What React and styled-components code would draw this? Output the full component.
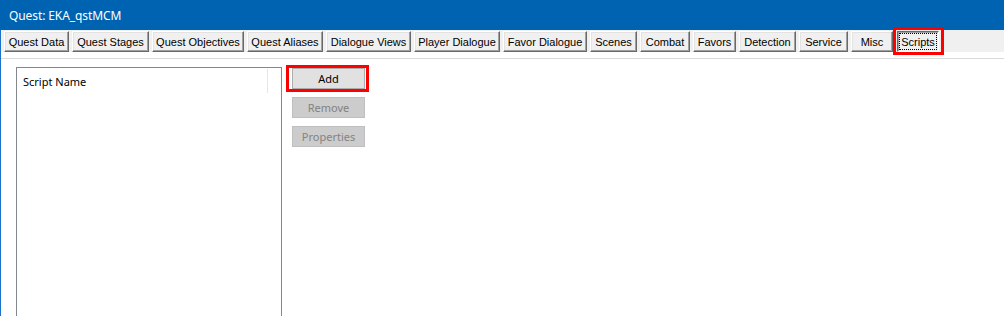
import React from "react";
import styled, { createGlobalStyle, css } from "styled-components";

const Global = createGlobalStyle`
  html, body { margin: 0; padding: 0; background: #ffffff; }
  body { width: 1004px; height: 316px; overflow: hidden; }
  #root { width: 1004px; height: 316px; }
`;

const Window = styled.div`
  width: 1004px;
  height: 316px;
  display: flex;
  flex-direction: column;
  background: #ffffff;
  overflow: hidden;
`;

const TitleBar = styled.div`
  height: 30px;
  flex: none;
  background: #0063b1;
  display: flex;
  align-items: center;
  padding-left: 9px;
`;

const Title = styled.span`
  color: #ffffff;
  font-family: "Noto Sans", "Open Sans", sans-serif;
  font-size: 12px;
  letter-spacing: -0.1px;
`;

const Body = styled.div`
  flex: 1;
  display: flex;
  flex-direction: column;
  border-left: 1px solid #1a73c8;
  min-height: 0;
`;

const TabArea = styled.div`
  flex: none;
  height: 28px;
  border-bottom: 1px solid #dadada;
  background: #ffffff;
`;

const TabStrip = styled.div`
  height: 21px;
  padding-top: 1px;
  padding-left: 3px;
  background: #f0f0f0;
  display: flex;
  gap: 3px;
`;

const Tab = styled.div`
  position: relative;
  box-sizing: border-box;
  width: ${(p) => p.$w}px;
  height: 21px;
  margin-left: ${(p) => p.$ml || 0}px;
  display: flex;
  align-items: center;
  justify-content: center;
  background: #f0f0f0;
  font-family: "Liberation Sans", Arial, sans-serif;
  font-size: 11px;
  color: #000000;
  border: 1px solid;
  ${(p) =>
    p.$selected
      ? css`
          border-color: #696969 #ffffff #ffffff #696969;
          box-shadow: inset 1px 1px 0 #a0a0a0;
          padding: 1px;
        `
      : css`
          border-color: #ffffff #696969 #696969 #ffffff;
          box-shadow: inset -1px -1px 0 #a0a0a0, inset 1px 1px 0 #e3e3e3;
        `}
`;

const FocusRect = styled.span`
  box-sizing: border-box;
  flex: 1;
  align-self: stretch;
  display: flex;
  align-items: center;
  justify-content: center;
  border: 1px dotted #000000;
  padding-top: 1px;
`;

const Highlight = styled.div`
  position: absolute;
  left: ${(p) => p.$l}px;
  right: ${(p) => p.$r}px;
  top: ${(p) => p.$t}px;
  bottom: ${(p) => p.$b}px;
  border: 3px solid #ff0000;
  pointer-events: none;
`;

const Content = styled.div`
  flex: 1;
  display: flex;
  align-items: flex-start;
  padding: 8px 0 0 15px;
  min-height: 0;
`;

const ListBox = styled.div`
  box-sizing: border-box;
  width: 266px;
  height: 260px;
  border: 1px solid #828790;
  background: #ffffff;
  flex: none;
`;

const ListHeader = styled.div`
  display: flex;
  height: 25px;
`;

const HeaderCell = styled.div`
  box-sizing: border-box;
  width: ${(p) => p.$w}px;
  height: 24px;
  margin-top: 1px;
  padding-left: 6px;
  display: flex;
  align-items: center;
  border-right: 1px solid #e5e5e5;
  font-family: "Noto Sans", "Open Sans", sans-serif;
  font-size: 11px;
  color: #000000;
`;

const ButtonColumn = styled.div`
  display: flex;
  flex-direction: column;
  gap: 8px;
  margin-left: 10px;
  margin-top: 1px;
`;

const Button = styled.div`
  position: relative;
  box-sizing: border-box;
  width: 73px;
  height: 21px;
  display: flex;
  align-items: center;
  justify-content: center;
  font-family: "Noto Sans", "Open Sans", sans-serif;
  font-size: 11px;
  ${(p) =>
    p.$disabled
      ? css`
          background: #cccccc;
          border: 1px solid #bfbfbf;
          color: #838383;
        `
      : css`
          background: #e1e1e1;
          border: 1px solid #adadad;
          color: #000000;
        `}
`;

const tabs = [
  ["Quest Data", 65],
  ["Quest Stages", 77],
  ["Quest Objectives", 92],
  ["Quest Aliases", 76],
  ["Dialogue Views", 85],
  ["Player Dialogue", 86],
  ["Favor Dialogue", 84],
  ["Scenes", 47],
  ["Combat", 50],
  ["Favors", 43],
  ["Detection", 57],
  ["Service", 49],
  ["Misc", 42],
];

export default function App() {
  return (
    <>
      <Global />
      <Window>
        <TitleBar>
          <Title>Quest: EKA_qstMCM</Title>
        </TitleBar>
        <Body>
          <TabArea>
            <TabStrip>
              {tabs.map(([label, w]) => (
                <Tab key={label} $w={w}>
                  {label}
                </Tab>
              ))}
              <Tab $w={42} $ml={1} $selected>
                <FocusRect>Scripts</FocusRect>
                <Highlight $l={-5} $r={-6} $t={-5} $b={-4} />
              </Tab>
            </TabStrip>
          </TabArea>
          <Content>
            <ListBox>
              <ListHeader>
                <HeaderCell $w={251}>Script Name</HeaderCell>
              </ListHeader>
            </ListBox>
            <ButtonColumn>
              <Button>
                Add
                <Highlight $l={-7} $r={-5} $t={-4} $b={-4} />
              </Button>
              <Button $disabled>Remove</Button>
              <Button $disabled>Properties</Button>
            </ButtonColumn>
          </Content>
        </Body>
      </Window>
    </>
  );
}
